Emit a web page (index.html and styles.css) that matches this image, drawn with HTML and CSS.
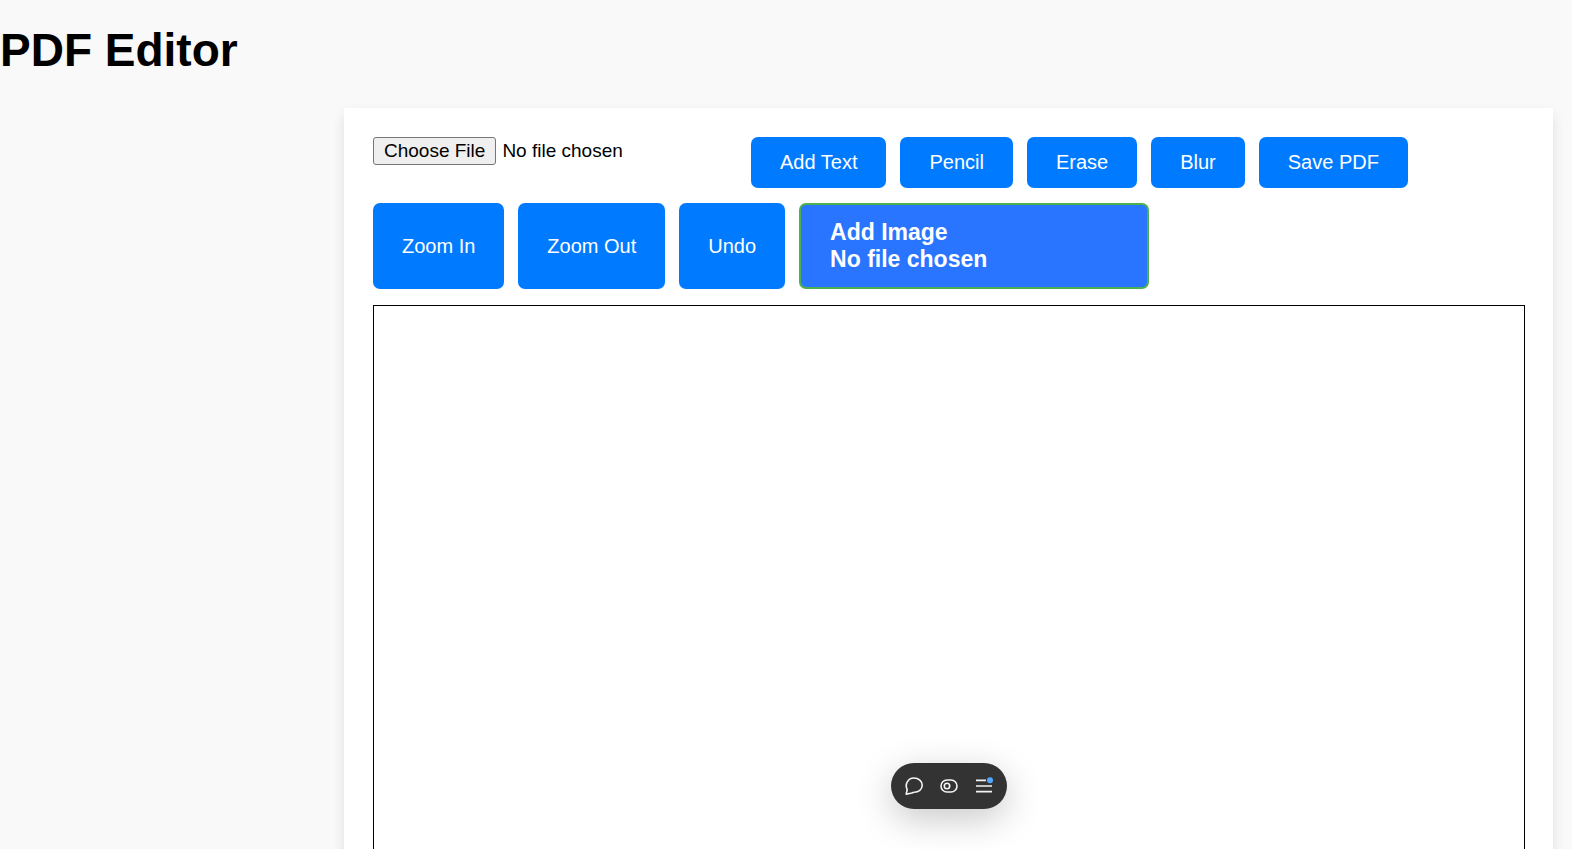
FILE: index.html
```html
<!DOCTYPE html>
<html lang="en">
<head>
  <meta charset="utf-8">
  <title>PDF Editor</title>
  <link rel="stylesheet" href="styles.css">
</head>
<body>
  <h1 class="title">PDF Editor</h1>
  <main class="panel">
    <div class="controls">
      <input class="pdf-file" type="file" aria-label="PDF file">
      <button class="btn" type="button">Add Text</button>
      <button class="btn" type="button">Pencil</button>
      <button class="btn" type="button">Erase</button>
      <button class="btn" type="button">Blur</button>
      <button class="btn" type="button">Save PDF</button>
      <button class="btn" type="button">Zoom In</button>
      <button class="btn" type="button">Zoom Out</button>
      <button class="btn" type="button">Undo</button>
      <div class="image-upload">
        <label for="image-file">Add Image</label>
        <input class="image-file" id="image-file" type="file">
      </div>
    </div>
    <canvas class="sheet"></canvas>
    <div class="floating" role="toolbar" aria-label="Tools">
      <button class="tool" type="button" aria-label="Comment">
        <svg viewBox="0 0 20 20" width="20" height="20" fill="none" stroke="#f4f4f4" stroke-width="1.6" stroke-linejoin="round"><path d="M2.2 18.2 L3.2 13.6 C0.6 8.3 3.8 2 10 2 C14.6 2 18.2 5.3 18.2 9.2 C18.2 13.4 14.6 16.2 10.2 16.2 C9 16.2 8.6 16.6 7.8 17 Z"/></svg>
      </button>
      <button class="tool" type="button" aria-label="Toggle view">
        <svg viewBox="0 0 20 20" width="20" height="20" fill="none" stroke="#f4f4f4" stroke-width="1.6"><rect x="2" y="4" width="16" height="12" rx="6"/><circle cx="8" cy="10" r="2.7"/></svg>
      </button>
      <button class="tool" type="button" aria-label="Menu">
        <svg viewBox="0 0 20 20" width="20" height="20" fill="none" stroke="#f4f4f4" stroke-width="1.6"><path d="M2 4.4H12M2 10H18M2 15.6H18"/><circle cx="16" cy="4.2" r="3" fill="#52a8ff" stroke="none"/></svg>
      </button>
    </div>
  </main>
</body>
</html>
```

FILE: styles.css
```css
* {
  box-sizing: border-box;
}

body {
  margin: 0;
  height: 100vh;
  overflow: hidden;
  background: #f9f9f9;
  color: #000;
  font-family: Arial, "Liberation Sans", sans-serif;
}

.title {
  margin: 24px 0 31px;
  font-size: 46px;
  line-height: 53px;
}

.panel {
  margin: 0 19px 0 344px;
  padding: 29px 28px 29px 29px;
  background: #fff;
  box-shadow: 0 6px 12px rgba(0, 0, 0, 0.1);
}

.controls {
  display: flex;
  flex-wrap: wrap;
  gap: 15px 14px;
  margin-bottom: 16px;
}

.pdf-file {
  align-self: flex-start;
  width: 364px;
  font: 19px/22px Arial, "Liberation Sans", sans-serif;
}

.pdf-file::file-selector-button {
  height: 28px;
  margin-right: 6px;
  padding: 1px 10px;
  border: 1px solid #767676;
  border-radius: 3px;
  background: #efefef;
  color: #000;
  font: inherit;
}

.btn {
  padding: 14px 29px;
  border: 0;
  border-radius: 7px;
  background: #007bff;
  color: #fff;
  font: 20px/23px Arial, "Liberation Sans", sans-serif;
  cursor: pointer;
}

.image-upload {
  width: 350px;
  padding: 14px 29px;
  border: 2px solid #4caf50;
  border-radius: 7px;
  background: #2a75ff;
  color: #fff;
  font-size: 23px;
  font-weight: bold;
  line-height: 27px;
}

.image-upload label {
  display: block;
}

.image-file {
  display: block;
  width: 100%;
  height: 27px;
  color: inherit;
  font: inherit;
}

.image-file::file-selector-button {
  display: none;
}

.sheet {
  display: block;
  width: 100%;
  height: 1200px;
  border: 1px solid #000;
}

.floating {
  position: fixed;
  bottom: 40px;
  left: calc(50% + 163px);
  display: flex;
  align-items: center;
  gap: 15px;
  height: 46px;
  padding: 0 13px;
  border-radius: 23px;
  background: #333;
  box-shadow: 0 10px 36px rgba(0, 0, 0, 0.22);
  transform: translateX(-50%);
}

.tool {
  display: flex;
  padding: 0;
  border: 0;
  background: none;
  cursor: pointer;
}
```
